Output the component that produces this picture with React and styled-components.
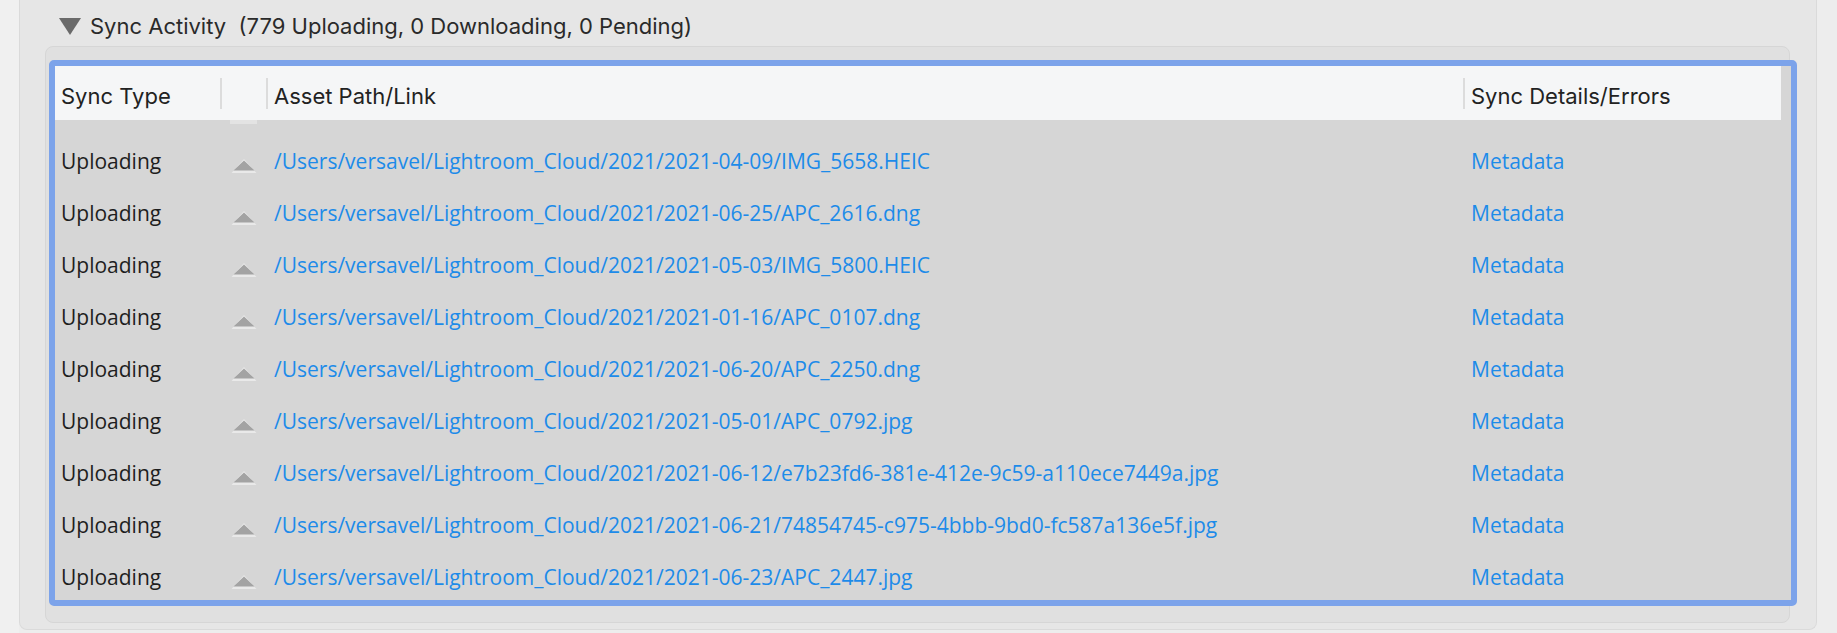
import React from 'react'
import styled, { createGlobalStyle } from 'styled-components'

const GlobalStyle = createGlobalStyle`
    html, body {
        margin: 0;
        padding: 0;
        background: #efefef;
    }
`

const Page = styled.div`
    display: flex;
    width: 1837px;
    height: 633px;
    overflow: hidden;
    background: #ededed;
`

const Gutter = styled.div`
    width: 19px;
    flex-shrink: 0;
    background: #f0f0f0;
`

const Panel = styled.section`
    width: 1798px;
    height: 630px;
    box-sizing: border-box;
    background: #e6e6e6;
    border: 1px solid #dadada;
    border-top: none;
    border-radius: 0 0 8px 8px;
    flex-shrink: 0;
`

const Title = styled.div`
    display: flex;
    align-items: center;
    height: 46px;
    padding-left: 39px;
    padding-top: 6px;
    box-sizing: border-box;
    font-family: Inter, "Liberation Sans", sans-serif;
    font-size: 22px;
    color: #2a2a2a;
    white-space: pre;

    svg {
        margin-right: 9px;
        margin-top: 1px;
    }
`

const InnerBox = styled.div`
    margin-left: 25px;
    width: 1745px;
    height: 577px;
    box-sizing: border-box;
    background: #e0e0e0;
    border: 1px solid #d6d6d6;
    border-radius: 8px;
    padding: 13px 0 0 3px;
`

const Table = styled.div`
    width: 1748px;
    height: 546px;
    box-sizing: border-box;
    border: 6px solid #7ca3ea;
    border-radius: 5px;
    background: #d6d6d6;
`

const cols = '165px 46px 1197px 1fr'

const HeadRow = styled.div`
    display: grid;
    grid-template-columns: ${cols};
    height: 54px;
    margin-right: 10px;
    background: #f5f6f7;
    font-family: Inter, "Liberation Sans", sans-serif;
    font-size: 22px;
    color: #222;
`

const HeadCell = styled.div`
    position: relative;
    display: flex;
    align-items: center;
    padding-left: ${p => p.$first ? 6 : 8}px;
    padding-top: 5px;

    &::before {
        content: '';
        display: ${p => p.$first ? 'none' : 'block'};
        position: absolute;
        left: 0;
        top: 12px;
        height: 31px;
        width: 2px;
        background: #dcdcdc;
    }
`

const Tab = styled.div`
    width: 27px;
    height: 4px;
    margin-left: 175px;
    background: #e3e3e3;
`

const Body = styled.div`
    padding-top: 11px;
`

const Row = styled.div`
    display: grid;
    grid-template-columns: ${cols};
    height: 52px;
    align-items: center;
    font-family: "Open Sans", "Liberation Sans", sans-serif;
    font-size: 21px;
    color: #1e1e1e;
`

const Cell = styled.div`
    padding-left: ${p => p.$pad || 8}px;
    white-space: nowrap;
    color: ${p => p.$link ? '#1d8be9' : 'inherit'};
`

const IconCell = styled.div`
    padding-left: 11px;
    padding-top: 8px;
    display: flex;
`

const UploadIcon = () => (
    <svg width="26" height="18" viewBox="0 0 26 18">
        <path d="M0.5 17 L13 3 L25.5 17 Z" fill="#e9e9e9" />
        <path d="M2.5 14.5 L13 4.5 L23.5 14.5 Z" fill="#a3a3a3" />
    </svg>
)

const paths = [
    '/Users/versavel/Lightroom_Cloud/2021/2021-04-09/IMG_5658.HEIC',
    '/Users/versavel/Lightroom_Cloud/2021/2021-06-25/APC_2616.dng',
    '/Users/versavel/Lightroom_Cloud/2021/2021-05-03/IMG_5800.HEIC',
    '/Users/versavel/Lightroom_Cloud/2021/2021-01-16/APC_0107.dng',
    '/Users/versavel/Lightroom_Cloud/2021/2021-06-20/APC_2250.dng',
    '/Users/versavel/Lightroom_Cloud/2021/2021-05-01/APC_0792.jpg',
    '/Users/versavel/Lightroom_Cloud/2021/2021-06-12/e7b23fd6-381e-412e-9c59-a110ece7449a.jpg',
    '/Users/versavel/Lightroom_Cloud/2021/2021-06-21/74854745-c975-4bbb-9bd0-fc587a136e5f.jpg',
    '/Users/versavel/Lightroom_Cloud/2021/2021-06-23/APC_2447.jpg',
]

const App = () => {
    return (
        <Page>
            <GlobalStyle />
            <Gutter />
            <Panel>
                <Title>
                    <svg width="22" height="17" viewBox="0 0 22 17">
                        <path d="M0 0 L22 0 L11 17 Z" fill="#6a6a6a" />
                    </svg>
                    {'Sync Activity  (779 Uploading, 0 Downloading, 0 Pending)'}
                </Title>
                <InnerBox>
                    <Table>
                        <HeadRow>
                            <HeadCell $first>Sync Type</HeadCell>
                            <HeadCell />
                            <HeadCell>Asset Path/Link</HeadCell>
                            <HeadCell>Sync Details/Errors</HeadCell>
                        </HeadRow>
                        <Tab />
                        <Body>
                            {paths.map(p => (
                                <Row key={p}>
                                    <Cell $pad={6}>Uploading</Cell>
                                    <IconCell><UploadIcon /></IconCell>
                                    <Cell $link>{p}</Cell>
                                    <Cell $link>Metadata</Cell>
                                </Row>
                            ))}
                        </Body>
                    </Table>
                </InnerBox>
            </Panel>
        </Page>
    )
}

export default App
